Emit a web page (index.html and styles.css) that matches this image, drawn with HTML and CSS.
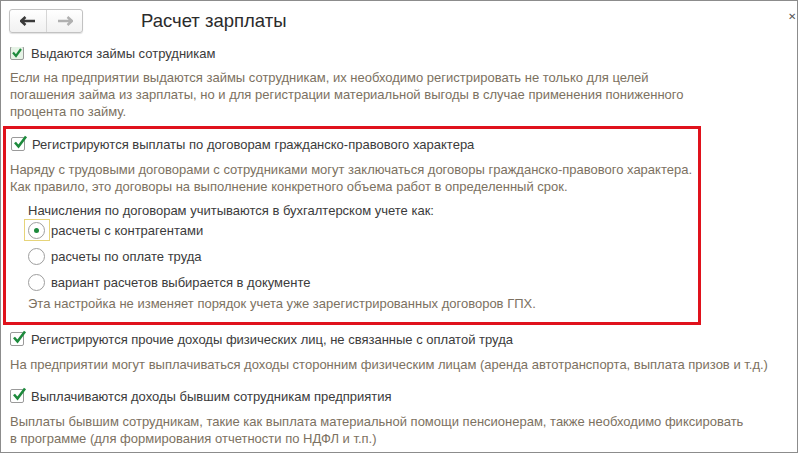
FILE: index.html
```html
<!DOCTYPE html>
<html lang="ru">
<head>
    <meta charset="UTF-8">
    <title>Расчет зарплаты</title>
    <link rel="stylesheet" href="styles.css">
</head>
<body>
<div class="window">
    <div class="header">
        <div class="nav">
            <button class="nav-btn back">
                <svg width="16" height="10" viewBox="0 0 16 10"><path d="M1 5h14M5.5 1L1 5l4.5 4" fill="none" stroke="#3a3a3a" stroke-width="2.6"/></svg>
            </button>
            <button class="nav-btn fwd">
                <svg width="16" height="10" viewBox="0 0 16 10"><path d="M1 5h14M10.5 1L15 5l-4.5 4" fill="none" stroke="#b0b0b0" stroke-width="2.4"/></svg>
            </button>
        </div>
        <h1 class="title">Расчет зарплаты</h1>
        <span class="close">&#x2715;</span>
    </div>

    <div class="content">
        <div class="inner">
            <label class="check first">
                <span class="box focus"><svg width="14" height="14" viewBox="0 0 14 14"><path d="M3 5.5l3 3.5 5-7" fill="none" stroke="#1d8a3c" stroke-width="2.2"/></svg></span>
                Выдаются займы сотрудникам
            </label>
            <p class="desc first-desc">Если на предприятии выдаются займы сотрудникам, их необходимо регистрировать не только для целей<br>погашения займа из зарплаты, но и для регистрации материальной выгоды в случае применения пониженного<br>процента по займу.</p>

            <div class="marked">
                <label class="check">
                    <span class="box"><svg width="16" height="16" viewBox="0 0 16 16"><path d="M3 7.5l3.5 4L14 1.5" fill="none" stroke="#1d8a3c" stroke-width="2.6"/></svg></span>
                    Регистрируются выплаты по договорам гражданско-правового характера
                </label>
                <p class="desc">Наряду с трудовыми договорами с сотрудниками могут заключаться договоры гражданско-правового характера.<br>Как правило, это договоры на выполнение конкретного объема работ в определенный срок.</p>

                <div class="group">
                    <div class="group-title">Начисления по договорам учитываются в бухгалтерском учете как:</div>
                    <label class="radio selected"><span class="dot on"></span>расчеты с контрагентами</label>
                    <label class="radio"><span class="dot"></span>расчеты по оплате труда</label>
                    <label class="radio"><span class="dot"></span>вариант расчетов выбирается в документе</label>
                    <p class="desc note">Эта настройка не изменяет порядок учета уже зарегистрированных договоров ГПХ.</p>
                </div>
            </div>

            <label class="check after-mark">
                <span class="box"><svg width="16" height="16" viewBox="0 0 16 16"><path d="M3 7.5l3.5 4L14 1.5" fill="none" stroke="#1d8a3c" stroke-width="2.6"/></svg></span>
                Регистрируются прочие доходы физических лиц, не связанные с оплатой труда
            </label>
            <p class="desc">На предприятии могут выплачиваться доходы сторонним физическим лицам (аренда автотранспорта, выплата призов и т.д.)</p>

            <label class="check spaced">
                <span class="box"><svg width="16" height="16" viewBox="0 0 16 16"><path d="M3 7.5l3.5 4L14 1.5" fill="none" stroke="#1d8a3c" stroke-width="2.6"/></svg></span>
                Выплачиваются доходы бывшим сотрудникам предприятия
            </label>
            <p class="desc">Выплаты бывшим сотрудникам, такие как выплата материальной помощи пенсионерам, также необходимо фиксировать<br>в программе (для формирования отчетности по НДФЛ и т.п.)</p>
        </div>
    </div>
</div>
</body>
</html>
```

FILE: styles.css
```css
html, body {
    margin: 0;
    background: #fff;
}

body {
    font-family: Arial, "Liberation Sans", sans-serif;
    font-size: 13px;
    color: #3b3b3b;
}

.window {
    width: 796px;
    height: 451px;
    border: 1px solid #8c8c8c;
    background: #fff;
    display: flex;
    flex-direction: column;
    overflow: hidden;
}

.header {
    height: 46px;
    flex: none;
    display: flex;
    align-items: flex-start;
    position: relative;
}

.nav {
    display: flex;
    margin: 8px 0 0 8px;
    border: 1px solid #c2c2c2;
    border-radius: 3px;
    background: linear-gradient(#fff, #f1f1f1);
    box-shadow: 0 1px 1px rgba(0, 0, 0, 0.12);
}

.nav-btn {
    width: 36px;
    height: 22px;
    border: none;
    background: transparent;
    padding: 0;
    display: flex;
    align-items: center;
    justify-content: center;
}

.nav-btn.fwd {
    border-left: 1px solid #d6d6d6;
}

.title {
    margin: 8px 0 0 58px;
    font-size: 18.5px;
    font-weight: normal;
    color: #2b2b2b;
    line-height: 24px;
}

.close {
    position: absolute;
    right: 1px;
    top: 10px;
    font-size: 10px;
    color: #555;
}

.content {
    flex: 1;
    overflow: hidden;
}

.inner {
    margin-top: -4px;
}

.check {
    display: flex;
    align-items: center;
    height: 20px;
    padding-left: 9px;
    color: #3b3b3b;
}

.box {
    width: 12px;
    height: 12px;
    border: 1px solid #9a9a9a;
    border-radius: 2px;
    background: #fff;
    margin-right: 7px;
    position: relative;
    flex: none;
}

.box svg {
    position: absolute;
    left: 0;
    top: -3px;
}

.box.focus {
    background: #e6f3e6;
}

.box.focus svg {
    top: 0;
    left: -1px;
}

.desc {
    margin: 7px 0 0;
    padding-left: 9px;
    line-height: 17px;
    color: #7c7161;
}

.first-desc {
    margin-top: 6px;
}

.marked {
    margin: 6px 0 0 2px;
    width: 692px;
    border: 3px solid #e0121c;
    padding: 5px 0 10px 0;
}

.marked .check {
    padding-left: 5px;
}

.marked .desc {
    padding-left: 4px;
}

.group {
    padding-left: 22px;
}

.group-title {
    margin-top: 7px;
    line-height: 17px;
    color: #3b3b3b;
}

.radio {
    display: flex;
    align-items: center;
    height: 22px;
    margin-top: 4px;
    margin-left: -3px;
    padding-left: 3px;
    width: 21px;
    white-space: nowrap;
}

.radio:first-of-type {
    margin-top: 0;
}

.radio.selected {
    border: 1px solid #e6d47a;
    height: 20px;
    margin-left: -4px;
    padding-left: 3px;
}

.dot {
    width: 15px;
    height: 15px;
    border: 1px solid #9e9e9e;
    border-radius: 50%;
    background: #fff;
    margin-right: 6px;
    flex: none;
    display: flex;
    align-items: center;
    justify-content: center;
}

.dot.on::after {
    content: "";
    width: 5px;
    height: 5px;
    border-radius: 50%;
    background: #1d8a3c;
}

.group .desc.note {
    margin-top: 2px;
    padding-left: 0;
}

.after-mark {
    margin-top: 4px;
}

.spaced {
    margin-top: 13px;
}
```
